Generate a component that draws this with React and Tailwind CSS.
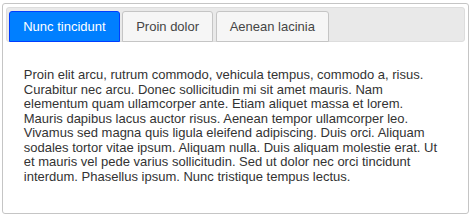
const lines = [
  "Proin elit arcu, rutrum commodo, vehicula tempus, commodo a, risus.",
  "Curabitur nec arcu. Donec sollicitudin mi sit amet mauris. Nam",
  "elementum quam ullamcorper ante. Etiam aliquet massa et lorem.",
  "Mauris dapibus lacus auctor risus. Aenean tempor ullamcorper leo.",
  "Vivamus sed magna quis ligula eleifend adipiscing. Duis orci. Aliquam",
  "sodales tortor vitae ipsum. Aliquam nulla. Duis aliquam molestie erat. Ut",
  "et mauris vel pede varius sollicitudin. Sed ut dolor nec orci tincidunt",
  "interdum. Phasellus ipsum. Nunc tristique tempus lectus.",
];

export default function App() {
  const tabBase =
    "mr-[2.6px] mt-[1px] mb-[-1px] pb-[1px] rounded-t-[3px] border";
  return (
    <div
      className="pl-[2px] pt-[3px] w-[469px]"
      style={{ fontFamily: '"Liberation Sans", Arial, sans-serif' }}
    >
      <div className="border border-[#c5c5c5] rounded-[3px] p-[2.6px] text-[13px] bg-white">
        <ul className="flex bg-[#e9e9e9] border border-[#dddddd] rounded-[3px] pt-[2.6px] px-[2.6px] m-0 list-none">
          <li className={`${tabBase} bg-[#007fff] border-[#003eff]`}>
            <span className="block px-[13px] py-[6.5px] text-white leading-[15px]">
              Nunc tincidunt
            </span>
          </li>
          <li className={`${tabBase} bg-[#f6f6f6] border-[#c5c5c5]`}>
            <span className="block px-[13px] py-[6.5px] text-[#454545] leading-[15px]">
              Proin dolor
            </span>
          </li>
          <li className={`${tabBase} bg-[#f6f6f6] border-[#c5c5c5]`}>
            <span className="block px-[13px] py-[6.5px] text-[#454545] leading-[15px]">
              Aenean lacinia
            </span>
          </li>
        </ul>
        <div className="px-[18.2px] py-[13px]">
          <p className="my-[13px] text-[#333333] leading-[14.5px]">
            {lines.map((l, i) => (
              <span key={i} className="block whitespace-nowrap">
                {l}
              </span>
            ))}
          </p>
        </div>
      </div>
    </div>
  );
}
